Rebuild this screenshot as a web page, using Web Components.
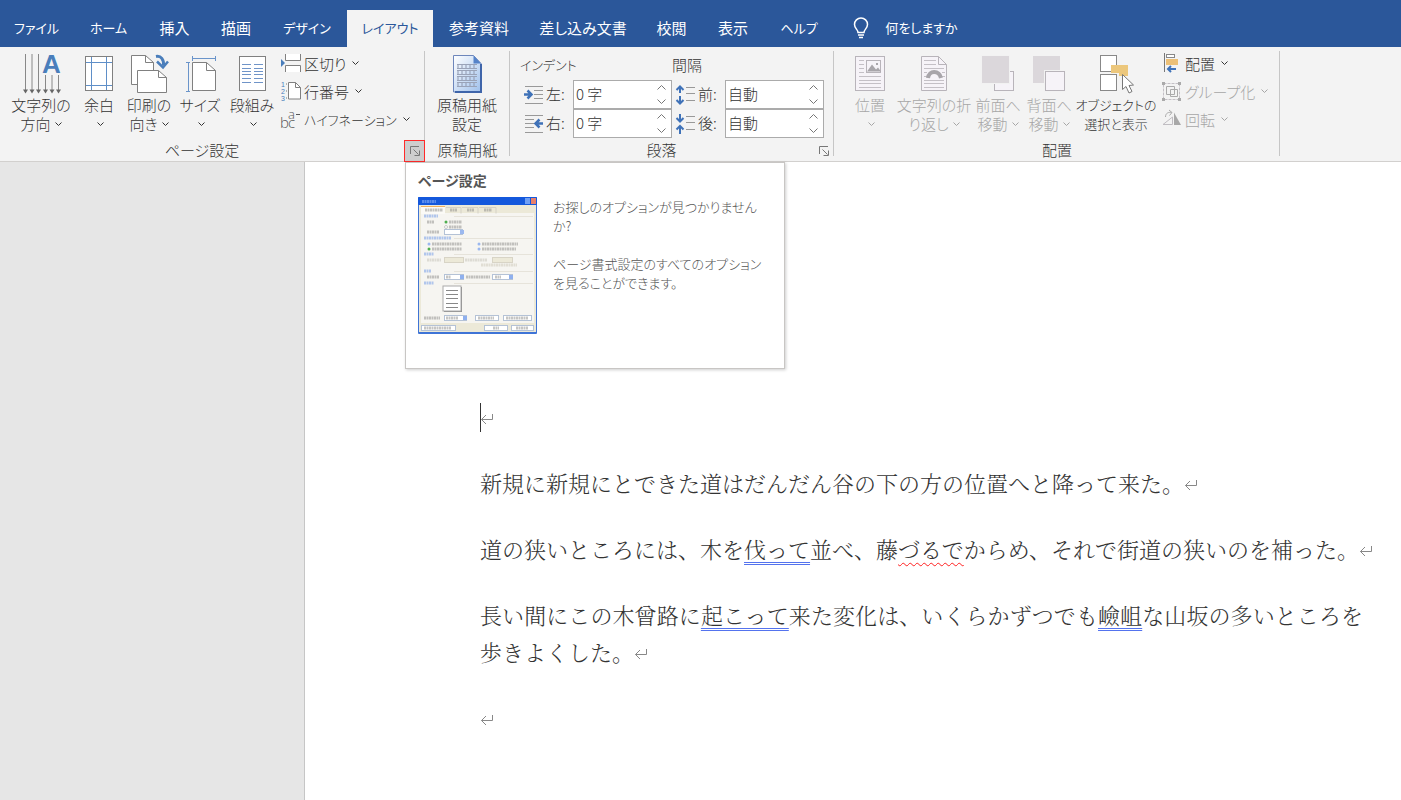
<!DOCTYPE html>
<html lang="ja">
<head>
<meta charset="utf-8">
<title>レイアウト - 文書</title>
<style>
html,body{height:100%}
body{margin:0;font-family:"Noto Sans CJK JP",sans-serif;font-weight:300;font-size:15px;color:#333;background:#e6e6e6}
</style>
</head>
<body>
<word-app></word-app>
<script>
const define=(tag,css,html,setup)=>{
  const t=document.createElement('template');
  t.innerHTML=`<style>*{box-sizing:border-box}${css}</style>${html}`;
  customElements.define(tag,class extends HTMLElement{
    connectedCallback(){
      if(this.shadowRoot)return;
      const r=this.attachShadow({mode:'open'});
      r.append(t.content.cloneNode(true));
      if(setup)setup(this,r);
    }
  });
};
const arrow=(x,y)=>`<path d="M${x} ${y}V37" stroke="#888"/><path d="M${x-2.5} 35.500h5l-2.500 4z" fill="#666"/>`;
const hl=(x1,x2,ys,c)=>ys.map(y=>`<path d="M${x1} ${y}H${x2}" stroke="${c}"/>`).join('');
const ICONS={
 direction:[40,40,arrow(4.5,0)+arrow(11,0)+arrow(17.5,0)+arrow(24.5,21)+arrow(31,21)+arrow(37.5,21)+`<text x="21" y="19" font-family="Liberation Sans" font-weight="bold" font-size="26" fill="#4a7ebb">A</text>`],
 margins:[40,40,`<rect x="6.5" y="2.5" width="27" height="34" fill="#fff" stroke="#808080"/><path d="M12.500 3v33M27.500 3v33M7 8.500h26M7 31.500h26" stroke="#5f8fc8"/>`],
 orient:[40,40,`<path d="M17 30.500H2.500V1.500h14l8 7V16" fill="#fff" stroke="#808080"/><path d="M16.500 1.500v7h8" fill="none" stroke="#808080"/><path d="M8.500 16.500h21l8 7v15h-29z" fill="#fff" stroke="#808080"/><path d="M29.500 16.500v7h8" fill="none" stroke="#808080"/><path d="M27 2.500c5-1 8 3 7.500 9" fill="none" stroke="#4a7ebb" stroke-width="3"/><path d="M28 7.500l6 6 5-6" fill="none" stroke="#4a7ebb" stroke-width="2.500"/>`],
 size:[40,40,`<path d="M12 4.500h23M12.500 2v5M35.500 2v5M8.500 9v28M6 8.500h4M6 37.500h4" stroke="#6a94ca"/><path d="M12.500 8.500h14l9 8v20h-23z" fill="#fff" stroke="#808080"/><path d="M26.500 8.500v8h9" fill="none" stroke="#808080"/>`],
 columns:[40,40,`<rect x="7.500" y="2.500" width="26" height="34" fill="#fff" stroke="#808080"/>`+hl(10,19,[10.5,14.5,17.5,20.5,24.5,28.5],'#6f94c8')+hl(22,31,[10.5,14.5,17.5,20.5,24.5,28.5],'#6f94c8')],
 genko:[40,40,`<defs><linearGradient id="g" x1="0" y1="0" x2="1" y2="1"><stop offset="0" stop-color="#fff"/><stop offset="1" stop-color="#9fc0ec"/></linearGradient></defs><path d="M6.500 1.500h20l7.500 8v28.500H6.500z" fill="url(#g)" stroke="#6d86bb"/><path d="M34 10v28H8" fill="none" stroke="#3f65aa" stroke-width="2"/><path d="M26.500 1.500v8H34z" fill="#5683c9"/>`+[8,14,20,26].map(y=>hl(10,30,[y+2.5,y+6.5],'#9aa3b8')+`<path d="M10.500 ${y+4.500}h20" stroke="#8d97b0" stroke-width="3" stroke-dasharray="1 3"/>`).join('')],
 breaks:[20,20,`<path d="M0 6l4 4-4 4z" fill="#4a7ebb"/><path d="M4.500 1v6.500h15V1M4.500 19v-6.500h15V19" fill="#fff" stroke="#808080"/>`],
 lines:[20,20,`<g font-family="Liberation Sans" font-size="7" fill="#4a7ebb"><text x="0" y="6">1</text><text x="0" y="13">2</text><text x="0" y="20">3</text></g><path d="M5 3h1M5 10h1M5 17h1" stroke="#777"/><path d="M7.500 1.500h7l5 5v11.500h-12z" fill="#fff" stroke="#808080"/><path d="M14.500 1.500v5h5" fill="none" stroke="#808080"/>`],
 hyphen:[20,20,`<g font-family="Open Sans" font-size="15" fill="#555"><text x="-1" y="19">b</text><text x="7" y="19">c</text><text x="7" y="10" font-size="13">a</text></g><path d="M15 5.500h4" stroke="#555"/>`],
 indl:[20,20,hl(1,19,[1.5,18.5],'#999')+hl(10,19,[5.5,9.5,13.5],'#999')+`<path d="M0 9.500h7M3.500 5.500l4 4-4 4" fill="none" stroke="#3f72b8" stroke-width="2.500"/>`],
 indr:[20,20,hl(1,19,[1.5,18.5],'#999')+hl(1,10,[5.5,9.5,13.5],'#999')+`<path d="M12 9.500h7M15.500 5.500l-4 4 4 4" fill="none" stroke="#3f72b8" stroke-width="2.500"/>`],
 before:[20,20,hl(10,19,[2.5,8.5,15.5],'#999')+`<path d="M4 1.500V8M.500 5L4 1.500 7.500 5M4 11v7M.500 15L4 18.500 7.500 15" fill="none" stroke="#3f72b8" stroke-width="2"/>`],
 after:[20,20,hl(10,19,[2.5,8.5,15.5],'#999')+`<path d="M4 0v7.500M.500 4L4 7.500 7.500 4M4 12v8M.500 15.500L4 12l3.500 3.500" fill="none" stroke="#3f72b8" stroke-width="2"/>`],
 position:[40,40,`<rect x="5.500" y="2.500" width="29" height="34" fill="#f6f3f8" stroke="#b8b4ba"/>`+hl(9,14,[6.5,10.5,14.5,18.5],'#c4c0c6')+hl(9,31,[22.5,26.5,29.5,33.5],'#c4c0c6')+`<rect x="16.500" y="6.500" width="14" height="12" fill="#f6f3f8" stroke="#b8b4ba"/><path d="M17 17.500l5-7 4 5 2-2 3 4z" fill="#a8a5aa"/><rect x="26" y="9" width="2" height="2" fill="#a8a5aa"/>`],
 wrap:[40,40,`<path d="M7.500 2.500h17l8 8v26h-25z" fill="#f6f3f8" stroke="#b8b4ba"/><path d="M24.500 2.500v8h8" fill="none" stroke="#b8b4ba"/>`+hl(10,22,[6.5,10.5],'#c4c0c6')+hl(10,30,[14.5,26.5,29.5,33.5],'#c4c0c6')+hl(10,13,[18.500,22.500],'#c4c0c6')+hl(28,31,[18.500,22.500],'#c4c0c6')+`<path d="M14 24c1-8 11-8 13 0" fill="none" stroke="#a8a5aa" stroke-width="4"/>`],
 front:[40,40,`<rect x="16.500" y="17.500" width="19" height="19" fill="#f6f3f8" stroke="#b8b4ba"/><rect x="3" y="1" width="29" height="29" fill="#f2f2f2"/><rect x="4" y="2" width="27" height="27" fill="#dbd7db"/>`],
 back:[40,40,`<rect x="4" y="2" width="27" height="27" fill="#dbd7db"/><rect x="15" y="16" width="22" height="22" fill="#f2f2f2"/><rect x="16.500" y="17.500" width="19" height="19" fill="#f6f3f8" stroke="#b8b4ba"/>`],
 select:[40,40,`<rect x="4.500" y="1.500" width="16" height="16" fill="#fff" stroke="#888"/><rect x="4.500" y="20.500" width="16" height="16" fill="#fff" stroke="#888"/><path d="M15 11h17v11H23v-3h-8z" fill="#ecc77c"/><path d="M26.500 20.500v15l3.500-3 3 6.500 3-1.500-3-6 4.500-.5z" fill="#fff" stroke="#777"/>`],
 align:[20,20,`<path d="M2.500 0v19" stroke="#777"/><rect x="4.500" y="1.500" width="8" height="3" fill="#fff" stroke="#888"/><rect x="4" y="6" width="12" height="6" fill="#ecc077"/><path d="M14 16H6M9 13l-3 3 3 3" fill="none" stroke="#3f72b8" stroke-width="2"/>`],
 group:[20,20,`<rect x="1.500" y="2.500" width="16" height="16" fill="none" stroke="#c4c0c6" stroke-dasharray="3 1"/><path d="M4.500 5.500h8v8h-8zM8.500 8.500h7v7h-7z" fill="none" stroke="#aaa"/><path d="M0 1h3v3H0zM16 1h3v3h-3zM0 17h3v3H0zM16 17h3v3h-3z" fill="#aaa"/>`],
 rotate:[20,20,`<path d="M1 15.500L10.500 8v7.500z" fill="none" stroke="#c0bdc2"/><path d="M12 3.500v12.500h7z" fill="#a8a8a8"/><path d="M3.500 8c0-4 3-5 6-4.500M7 1l3 2.500L7.500 6.500" fill="none" stroke="#aaa"/>`],
 launch:[10,10,`<path d="M.500 8V.500H9M3.500 3.500L8.500 8.500M9.500 4.500v5h-5" fill="none" stroke="#777"/>`],
 chevron:[7,5,`<path d="M.500.500l3 3 3-3" fill="none" stroke="currentColor"/>`],
 up:[9,5,`<path d="M.500 4.500l4-4 4 4" fill="none" stroke="#777"/>`],
 down:[9,5,`<path d="M.500.500l4 4 4-4" fill="none" stroke="#777"/>`],
 bulb:[16,22,`<path d="M5 15.500c0-3-3.500-4-3.500-8a6.500 6.500 0 0 1 13 0c0 4-3.500 5-3.500 8z" fill="none" stroke="#fff" stroke-width="1.500"/><path d="M5 18h6M6 20.500h4" stroke="#fff" stroke-width="1.500"/>`],
 ret:[14,12,`<path d="M12.500 1v5.500H1.500M6 2L1.500 6.500 6 11" fill="none" stroke="#888"/>`]
};
define('word-icon',`:host{display:inline-block;line-height:0}svg{display:block;overflow:visible}`,``,(el,r)=>{
  const [w,h,s]=ICONS[el.getAttribute('name')];
  r.innerHTML+=`<svg width="${w}" height="${h}" viewBox="0 0 ${w} ${h}" aria-hidden="true">${s}</svg>`;
});

define('word-tab',`:host{display:block;flex:none}
 button{width:100%;height:37px;border:0;padding:0 0 2px;background:none;color:#fff;font:inherit;font-feature-settings:"palt";white-space:nowrap;display:flex;align-items:center;justify-content:center;gap:16px}
 :host([selected]) button{background:#f3f3f3;color:#2b579a}
 :host([kana]) button{font-size:13px}`,
 `<button role="tab"><slot></slot></button>`,(el,r)=>{
  el.style.width=el.getAttribute('width')+'px';
  r.querySelector('button').setAttribute('aria-selected',el.hasAttribute('selected'));
});
define('word-tabs',`:host{display:flex;height:47px;background:#2b579a;align-items:flex-end;font-weight:400}`,`<slot></slot>`);

define('ribbon-group',`:host{display:flex;flex-direction:column;flex:none;position:relative;height:114px;padding-top:4px}
 :host::after{content:"";position:absolute;right:0;top:4px;height:105px;width:1px;background:#c6c6c6}
 .body{display:flex;height:89px;padding-left:var(--lead,0)}
 .foot{display:flex;height:21px;line-height:20px;white-space:nowrap;font-feature-settings:"palt"}
 .cap{flex:1;text-align:center}`,
 `<div class="body"><slot></slot></div><div class="foot"><span class="cap"></span><slot name="launcher"></slot></div>`,(el,r)=>{
  el.style.width=el.getAttribute('width')+'px';
  r.querySelector('.cap').textContent=el.getAttribute('label');
});
define('dialog-launcher',`:host{display:block;position:relative;z-index:1;flex:none;width:21px}
 button{display:flex;align-items:center;justify-content:center;width:100%;height:22px;padding:0;border:0;background:none}
 :host([active]) button{background:#cdcdcd;outline:1px solid #ff2a2a;outline-offset:-1px}`,
 `<button aria-label="ダイアログを開く"><word-icon name="launch"></word-icon></button>`);

define('ribbon-button',`:host{display:block;flex:none}
 button{width:100%;height:85px;border:0;padding:0;background:none;font:inherit;color:inherit;line-height:19px;white-space:nowrap;display:flex;flex-direction:column;align-items:center;font-feature-settings:"palt"}
 button:disabled{color:#a6a6a6}
 .pic{height:44px;padding-top:3px;flex:none}
 .arrow{margin-left:4px;vertical-align:3px}
 :host([plain]) .arrow{display:none}
 :host([kana]) button{font-size:13px}`,
 `<button><span class="pic"></span><span><slot></slot><word-icon class="arrow" name="chevron"></word-icon></span></button>`,(el,r)=>{
  el.style.width=el.getAttribute('width')+'px';
  r.querySelector('.pic').innerHTML=`<word-icon name="${el.getAttribute('icon')}"></word-icon>`;
  r.querySelector('button').disabled=el.hasAttribute('disabled');
});
define('ribbon-item',`:host{display:block}
 button{height:28px;border:0;padding:0;background:none;font:inherit;color:inherit;white-space:nowrap;display:flex;align-items:center;gap:3px;font-feature-settings:"palt"}
 button:disabled{color:#a6a6a6}
 .pic{display:flex}
 .arrow{margin-left:3px}
 :host([kana]) button{font-size:13px}`,
 `<button><span class="pic"></span><slot></slot><word-icon class="arrow" name="chevron"></word-icon></button>`,(el,r)=>{
  r.querySelector('.pic').innerHTML=`<word-icon name="${el.getAttribute('icon')}"></word-icon>`;
  r.querySelector('button').disabled=el.hasAttribute('disabled');
});
define('ribbon-stack',`:host{display:flex;flex-direction:column;flex:none;margin-top:-2px;padding-left:var(--lead,0)}`,`<slot></slot>`);

define('spin-field',`:host{display:grid;grid-template-columns:22px 27px 99px;align-items:center;padding-left:4px;height:29px;white-space:nowrap}
 .pic{display:flex}
 .box{display:flex;height:29px;background:#fff;border:1px solid #ababab}
 input{flex:1;min-width:0;border:0;padding:0 0 2px 2px;background:none;font:inherit;color:inherit;outline:0}
 label{line-height:27px;padding-bottom:2px}
 .spin{display:flex;flex-direction:column;width:20px}
 .spin button{flex:1;border:0;padding:0;background:none;display:flex;align-items:center;justify-content:center}`,
 `<span class="pic"></span><label for="v"></label><div class="box"><input id="v" type="text"><div class="spin"><button aria-label="増やす"><word-icon name="up"></word-icon></button><button aria-label="減らす"><word-icon name="down"></word-icon></button></div></div>`,(el,r)=>{
  r.querySelector('.pic').innerHTML=`<word-icon name="${el.getAttribute('icon')}"></word-icon>`;
  r.querySelector('label').textContent=el.getAttribute('label');
  r.querySelector('input').value=el.getAttribute('value');
});
define('spin-set',`:host{display:block;width:152px;flex:none}
 h3{margin:0;height:29px;line-height:27px;font-size:15px;font-weight:inherit;font-feature-settings:"palt"}
 :host([kana]) h3{font-size:13px}`,`<h3></h3><slot></slot>`,(el,r)=>{r.querySelector('h3').textContent=el.getAttribute('label')});

define('dialog-preview',`:host{display:block;width:119px;height:137px}svg{display:block}`,'',(el,r)=>{
  const t=(x,y,w,c='#8d8d8a')=>`<path d="M${x} ${y}h${w}" stroke="${c}" stroke-width="3" stroke-dasharray="2 .5" opacity=".5"/>`;
  const b=(x,y,w,h,f='#fff',s='#b4c2d6')=>`<rect x="${x+.5}" y="${y+.5}" width="${w}" height="${h}" fill="${f}" stroke="${s}"/>`;
  const blue='#6f98e8';
  r.innerHTML+=`<svg width="119" height="137" viewBox="0 0 119 137" aria-hidden="true">
  <rect width="119" height="137" rx="1" fill="#3f74d6"/><rect width="119" height="8" rx="1" fill="#1458dc"/><rect x="1" y="8" width="117" height="127" fill="#ece9d8"/><rect x="3" y="16" width="113" height="110" fill="#f6f5f1"/>
  <rect x="3" y="9" width="24" height="8" fill="#fbfaf6"/><path d="M3 9.500h24" stroke="#f0b060"/>
  <path d="M28 10.500h15v6M44 10.500h16v6M61 10.500h17v6" fill="none" stroke="#d4d1c6"/>
  ${t(4,4.5,14,'#9fc0ff')}<rect x="107" y="1" width="5" height="6" fill="#6f9ff4"/><rect x="113" y="1" width="5" height="6" fill="#e8806a"/>
  ${t(7,13,18)+t(32,13,7)+t(49,13,7)+t(66,13,8)}
  ${t(6,19,14,blue)+t(9,25,7)+t(31,25,13)+t(31,30,13)+t(9,35,12)+b(26,32,18,5)}
  <circle cx="28" cy="25" r="1.500" fill="#4fae4f"/><circle cx="28" cy="30" r="1.500" fill="#fff" stroke="#999" stroke-width=".5"/><rect x="42" y="33" width="4" height="4" fill="#9bb8ef"/>
  ${t(6,41,27,blue)+t(14,47,30)+t(14,52,30)+t(64,47,36)+t(64,52,34)}
  <circle cx="11" cy="47" r="1.500" fill="#9bb8ef"/><circle cx="11" cy="52" r="1.500" fill="#4fae4f"/><circle cx="61" cy="47" r="1.500" fill="#9bb8ef"/><circle cx="61" cy="52" r="1.500" fill="#9bb8ef"/>
  ${t(6,57,10,blue)+t(9,63,14,'#c6c3b8')+b(26,60,19,5,'#ece9d8','#d8d4c6')+t(47,63,22,'#c6c3b8')+b(74,60,20,5,'#ece9d8','#d8d4c6')+t(63,68,36,'#cdc9b8')}
  ${t(6,74,7,blue)+t(9,80,12)+b(26,77,19,5)+t(28,80,5)+t(48,80,24)+b(74,77,20,5)+t(77,80,6)+t(6,86,10,blue)}
  <rect x="42" y="78" width="4" height="4" fill="#8fb0ee"/><rect x="91" y="78" width="4" height="4" fill="#8fb0ee"/>
  ${[19,41,57,74,86].map(y=>`<path d="M36 ${y+.5}h79" stroke="#e6e3da"/>`).join('')}
  <rect x="26" y="90" width="18" height="25" fill="#888"/><rect x="25" y="89" width="18" height="25" fill="#fff" stroke="#aaa"/>
  ${[93.5,97.5,101.5,106.5,110.5].map(y=>`<path d="M28 ${y}h12" stroke="#888"/>`).join('')}
  ${t(6,121,16)+b(26,118,22,5)+t(28,121,12)+b(57,118,23,5)+t(60,121,16)+b(85,118,28,5)+t(88,121,22)}
  <rect x="45" y="119" width="4" height="4" fill="#8fb0ee"/>
  ${b(3,128,34,5)+t(6,131,27)+b(66,128,23,5)+t(75,131,6)+b(93,128,22,5)+t(98,131,12)}</svg>`;
});
define('ribbon-tip',`:host{display:block;position:absolute;left:405px;top:0;width:380px;min-height:207px;padding:7px 13px 34px 12px;background:#fff;border:1px solid #c8c6c4;box-shadow:1px 1px 3px #0003;z-index:2;box-sizing:border-box;color:#555}
 h2{margin:0 0 6px;font-size:14px;line-height:21px;font-weight:700;color:#555;font-feature-settings:"palt"}
 .row{display:flex;gap:16px}
 .txt{font-size:13px;line-height:19px;font-feature-settings:"palt";white-space:nowrap}
 ::slotted(p){margin:0 0 19px}`,
 `<h2>ページ設定</h2><div class="row"><dialog-preview></dialog-preview><div class="txt"><slot></slot></div></div>`);

define('doc-page',`:host{display:block;flex:1;min-width:0;background:#fff;border-left:1px solid #c6c6c6;padding:236px 38px 0 175px;font-family:"Noto Serif CJK JP","Noto Sans CJK JP",serif;font-weight:300;font-size:22px;line-height:37px;color:#333;box-sizing:border-box}`,`<slot></slot>`);
define('doc-para',`:host{display:block;margin-bottom:29px;text-align:justify}
 word-icon{margin-right:-14px;vertical-align:1px}
 .caret{display:none}
 :host([caret]) .caret{display:inline-block;width:1px;height:29px;margin-right:-1px;background:#333;vertical-align:-6px}`,
 `<span class="caret"></span><slot></slot><word-icon name="ret"></word-icon>`);
define('doc-mark',`:host{display:inline;text-decoration-line:underline;text-decoration-style:double;text-decoration-color:#5473ee;text-decoration-thickness:1px;text-underline-offset:4px;text-decoration-skip-ink:none}
 :host([spelling]){text-decoration-style:wavy;text-decoration-color:#ff2020}`,`<slot></slot>`);

define('word-app',`:host{display:flex;flex-direction:column;min-height:100vh}
 .ribbon{display:flex;height:115px;background:#f3f3f3;border-bottom:1px solid #d2d0ce}
 main{display:flex;flex:1;position:relative;background:#e6e6e6}
 .canvas{flex:none;width:304px}`,
`<word-tabs role="tablist">
 <word-tab width="73" kana>ファイル</word-tab><word-tab width="71" kana>ホーム</word-tab><word-tab width="61">挿入</word-tab><word-tab width="62">描画</word-tab><word-tab width="80" kana>デザイン</word-tab><word-tab width="86" kana selected>レイアウト</word-tab><word-tab width="92">参考資料</word-tab><word-tab width="116">差し込み文書</word-tab><word-tab width="61">校閲</word-tab><word-tab width="62">表示</word-tab><word-tab width="70" kana>ヘルプ</word-tab><word-tab width="143" kana><word-icon name="bulb"></word-icon>何をしますか</word-tab>
</word-tabs>
<div class="ribbon">
 <ribbon-group width="425" label="ページ設定" style="--lead:8px">
  <ribbon-button width="66" icon="direction">文字列の<br>方向</ribbon-button><ribbon-button width="50" icon="margins">余白<br></ribbon-button><ribbon-button width="50" icon="orient">印刷の<br>向き</ribbon-button><ribbon-button width="52" icon="size">サイズ<br></ribbon-button><ribbon-button width="52" icon="columns">段組み<br></ribbon-button>
  <ribbon-stack style="--lead:3px"><ribbon-item icon="breaks">区切り</ribbon-item><ribbon-item icon="lines">行番号</ribbon-item><ribbon-item icon="hyphen" kana>ハイフネーション</ribbon-item></ribbon-stack>
  <dialog-launcher slot="launcher" active></dialog-launcher>
 </ribbon-group>
 <ribbon-group width="85" label="原稿用紙"><ribbon-button width="84" icon="genko" plain>原稿用紙<br>設定</ribbon-button></ribbon-group>
 <ribbon-group width="324" label="段落" style="--lead:10px">
  <spin-set label="インデント" kana><spin-field icon="indl" label="左:" value="0 字"></spin-field><spin-field icon="indr" label="右:" value="0 字"></spin-field></spin-set>
  <spin-set label="間隔"><spin-field icon="before" label="前:" value="自動"></spin-field><spin-field icon="after" label="後:" value="自動"></spin-field></spin-set>
  <dialog-launcher slot="launcher"></dialog-launcher>
 </ribbon-group>
 <ribbon-group width="446" label="配置" style="--lead:10px">
  <ribbon-button width="52" icon="position" disabled>位置<br></ribbon-button><ribbon-button width="76" icon="wrap" disabled>文字列の折<br>り返し</ribbon-button><ribbon-button width="52" icon="front" disabled>前面へ<br>移動</ribbon-button><ribbon-button width="50" icon="back" disabled>背面へ<br>移動</ribbon-button><ribbon-button width="84" icon="select" kana plain>オブジェクトの<br>選択と表示</ribbon-button>
  <ribbon-stack style="--lead:4px"><ribbon-item icon="align">配置</ribbon-item><ribbon-item icon="group" disabled>グループ化</ribbon-item><ribbon-item icon="rotate" disabled>回転</ribbon-item></ribbon-stack>
 </ribbon-group>
</div>
<main>
 <div class="canvas"></div>
 <doc-page>
  <doc-para caret></doc-para>
  <doc-para>新規に新規にとできた道はだんだん谷の下の方の位置へと降って来た。</doc-para>
  <doc-para>道の狭いところには、木を<doc-mark>伐って</doc-mark>並べ、藤<doc-mark spelling>づるで</doc-mark>からめ、それで街道の狭いのを補った。</doc-para>
  <doc-para>長い間にこの木曾路に<doc-mark>起こって</doc-mark>来た変化は、いくらかずつでも<doc-mark>嶮岨</doc-mark>な山坂の多いところを<wbr>歩きよくした。</doc-para>
  <doc-para></doc-para>
 </doc-page>
 <ribbon-tip role="tooltip"><p>お探しのオプションが見つかりません<br>か?</p><p>ページ書式設定のすべてのオプション<br>を見ることができます。</p></ribbon-tip>
</main>`);
</script>
</body>
</html>
